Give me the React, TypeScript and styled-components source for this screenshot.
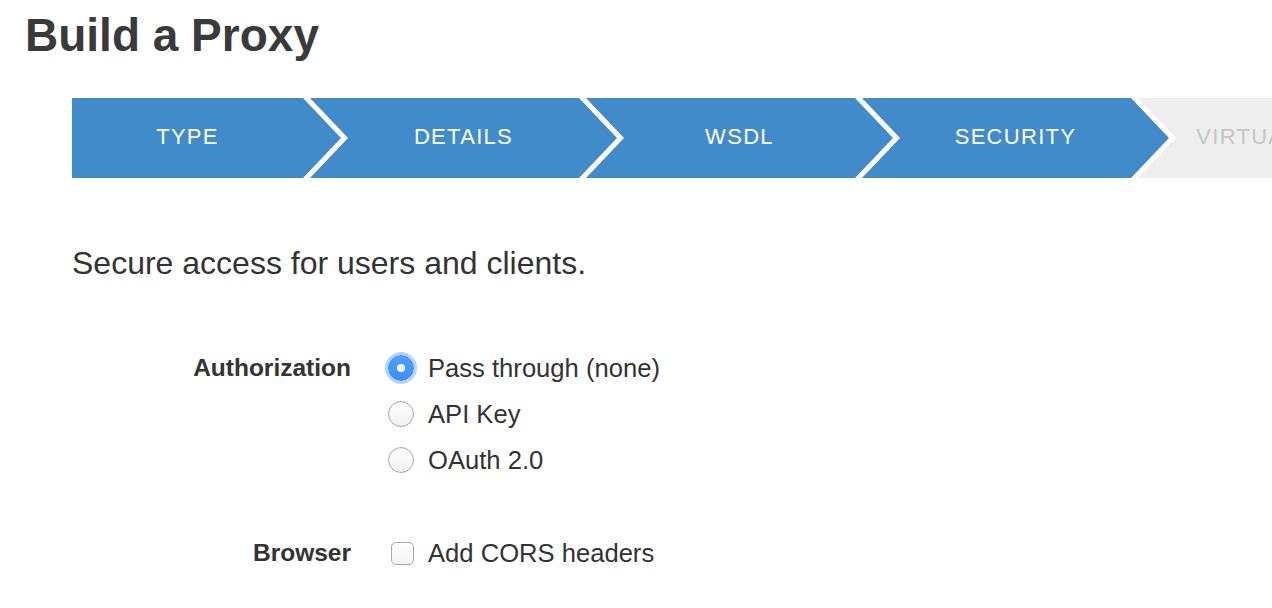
import React from 'react'
import styled, { createGlobalStyle } from 'styled-components'

const GlobalStyle = createGlobalStyle`
  html, body {
    margin: 0;
    padding: 0;
    background: #fff;
    overflow: hidden;
  }
  body {
    font-family: "Liberation Sans", Arial, Helvetica, sans-serif;
    color: #333;
  }
`

const Page = styled.div`
  width: 1272px;
  height: 608px;
  padding-top: 10px;
  box-sizing: border-box;
`
const Title = styled.h1`
  margin: 0 0 0 25px;
  font-size: 46px;
  line-height: 51px;
  font-weight: bold;
  color: #3a3a3a;
`
const Wizard = styled.div`
  display: flex;
  margin: 37px 0 0 72px;
  height: 80px;
  overflow: hidden;
`
const Step = styled.div<{ $first?: boolean; $done?: boolean }>`
  flex: none;
  box-sizing: border-box;
  width: ${({ $first }) => ($first ? '269px' : '307px')};
  margin-left: ${({ $first }) => ($first ? '0' : '-31px')};
  padding: 0 38px 2px ${({ $first }) => ($first ? '0' : '38px')};
  height: 80px;
  display: flex;
  align-items: center;
  justify-content: center;
  background: ${({ $done }) => ($done ? '#428bca' : '#eeeeee')};
  color: ${({ $done }) => ($done ? '#fff' : '#c6c6c6')};
  font-size: 22px;
  letter-spacing: 1.3px;
  white-space: nowrap;
  clip-path: ${({ $first }) =>
    $first
      ? 'polygon(0 0, calc(100% - 38px) 0, 100% 50%, calc(100% - 38px) 100%, 0 100%)'
      : 'polygon(0 0, calc(100% - 38px) 0, 100% 50%, calc(100% - 38px) 100%, 0 100%, 38px 50%)'};
`
const Lead = styled.p`
  margin: 66px 0 0 72px;
  font-size: 32px;
  line-height: 38px;
  color: #333;
`
const Form = styled.div`
  display: grid;
  grid-template-columns: 279px 1fr;
  column-gap: 36px;
  row-gap: 47px;
  margin: 63px 0 0 72px;
`
const Label = styled.div`
  text-align: right;
  font-size: 24.5px;
  font-weight: bold;
  line-height: 46px;
  color: #333;
`
const Options = styled.div`
  display: flex;
  flex-direction: column;
`
const Option = styled.label`
  display: flex;
  align-items: center;
  gap: 13px;
  height: 46px;
  font-size: 25.6px;
  color: #333;
`
const Control = styled.span`
  width: 28px;
  display: flex;
  justify-content: center;
  align-items: center;
`
const Radio = styled.span<{ $checked?: boolean }>`
  box-sizing: border-box;
  width: 26px;
  height: 26px;
  border-radius: 50%;
  display: flex;
  align-items: center;
  justify-content: center;
  border: 1px solid ${({ $checked }) => ($checked ? '#3b8ff0' : '#a9a9a9')};
  background: ${({ $checked }) =>
    $checked ? 'linear-gradient(#4ea2fb, #3a91f5)' : 'linear-gradient(#ffffff, #f1f1f1)'};
  box-shadow: ${({ $checked }) =>
    $checked ? '0 0 0 3px rgba(90, 160, 245, 0.45)' : 'inset 0 1px 1px rgba(0,0,0,0.05)'};
  &::after {
    content: '';
    display: ${({ $checked }) => ($checked ? 'block' : 'none')};
    width: 8px;
    height: 8px;
    border-radius: 50%;
    background: #fff;
  }
`
const Checkbox = styled.span`
  box-sizing: border-box;
  width: 23px;
  height: 23px;
  margin-left: 2px;
  border-radius: 5px;
  border: 1px solid #a9a9a9;
  background: linear-gradient(#ffffff, #f3f3f3);
`

const steps = ['TYPE', 'DETAILS', 'WSDL', 'SECURITY', 'VIRTUAL HOSTS', 'BUILD']

const App = () => {
  return (
    <Page>
      <GlobalStyle />
      <Title>Build a Proxy</Title>
      <Wizard>
        {steps.map((s, i) => (
          <Step key={s} $first={i === 0} $done={i < 4}>
            {s}
          </Step>
        ))}
      </Wizard>
      <Lead>Secure access for users and clients.</Lead>
      <Form>
        <Label>Authorization</Label>
        <Options>
          <Option>
            <Control><Radio $checked /></Control>
            Pass through (none)
          </Option>
          <Option>
            <Control><Radio /></Control>
            API Key
          </Option>
          <Option>
            <Control><Radio /></Control>
            OAuth 2.0
          </Option>
        </Options>
        <Label>Browser</Label>
        <Options>
          <Option>
            <Control><Checkbox /></Control>
            Add CORS headers
          </Option>
        </Options>
      </Form>
    </Page>
  )
}

export default App
